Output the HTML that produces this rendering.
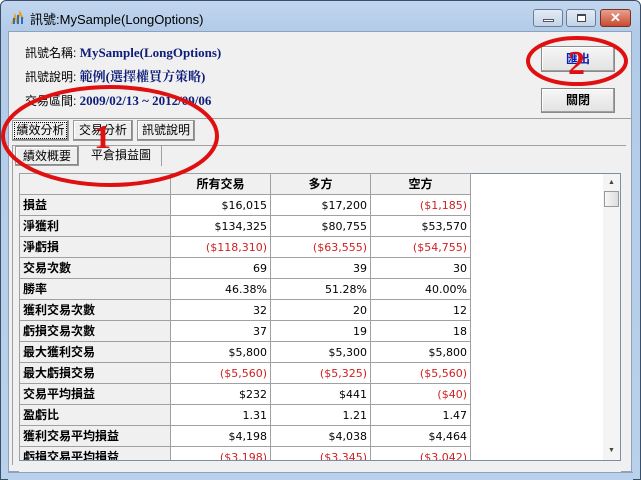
<!DOCTYPE html>
<html><head><meta charset="utf-8"><style>
*{margin:0;padding:0;box-sizing:border-box}
body{width:641px;height:480px;overflow:hidden;background:#fff;font-family:"Liberation Sans","Noto Sans CJK TC",sans-serif;font-size:12px;position:relative}
.frame{position:absolute;left:0;top:0;width:641px;height:480px;background:linear-gradient(#c2d6ee,#b2cbe8 30px,#b9d1ea);border:1px solid #3a4f6a;border-radius:6px 6px 0 0}
.title{position:absolute;left:30px;top:9px;font-size:13px;color:#000}
.wb{position:absolute;top:9px;height:18px;border:1px solid #6b7d95;border-radius:3px;background:linear-gradient(#e3ecf6,#c3d3e6)}
.client{position:absolute;left:8px;top:31px;width:624px;height:441px;background:#f0f0f0;border:1px solid #8da2bd}
.abs{position:absolute}
.lbl{position:absolute;left:25px;font-size:12px;color:#000;line-height:16px;height:16px;white-space:nowrap}
.lbl b{color:#0d1c78;font-family:"Liberation Serif","Noto Serif CJK SC",serif;font-size:13px;line-height:16px}
.btn{position:absolute;background:linear-gradient(#f6f6f6,#e2e2e2);border:1px solid #8a8a8a;box-shadow:inset -1px -1px 0 #a0a0a0,inset 1px 1px 0 #fff;text-align:center;font-weight:bold}
.tb{position:absolute;top:120px;height:21px;border:1px solid #999;background:#eee;box-shadow:inset -1px -1px 0 #888,inset 1px 1px 0 #fff;text-align:center;line-height:19px;font-size:12px}
table{border-collapse:collapse;position:absolute;left:19px;top:173px;background:#fff}
td{border:1px solid #a0a0a0;height:21px;line-height:19px;font-size:11px;padding:0 3px;text-align:right;vertical-align:middle;font-family:"DejaVu Sans",sans-serif;white-space:nowrap}
td.h{background:#f0f0f0;text-align:left;font-weight:bold;font-size:12px;font-family:"Liberation Sans","Noto Sans CJK TC",sans-serif;width:151px}
tr.hd td{background:#f0f0f0;text-align:center;font-weight:bold;font-size:12px;font-family:"Liberation Sans","Noto Sans CJK TC",sans-serif}
.r{color:#d02020}
</style></head><body>
<div class="frame"></div>
<svg class="abs" style="left:10px;top:10px" width="16" height="16"><path d="M2 14 L5 6 L7 12 L10 3 L13 9" stroke="#f0a020" stroke-width="2" fill="none"/><path d="M4 14 V8 M8 14 V5 M12 14 V7" stroke="#2a70c0" stroke-width="2"/></svg>
<div class="title">訊號:MySample(LongOptions)</div>
<div class="wb" style="left:533px;width:30px"><div class="abs" style="left:9px;top:9px;width:11px;height:3px;border:1px solid #556;background:#fff"></div></div>
<div class="wb" style="left:566px;width:30px"><div class="abs" style="left:10px;top:4px;width:9px;height:8px;border:1px solid #445;border-top-width:2px;background:#fff"></div></div>
<div class="wb" style="left:600px;width:31px;background:linear-gradient(#e8a090,#c84a30);border-color:#7a3020;color:#fff;text-align:center;font-weight:bold;font-size:13px;line-height:15px">✕</div>
<div class="client"></div>
<div class="lbl" style="top:45px">訊號名稱: <b>MySample(LongOptions)</b></div>
<div class="lbl" style="top:69px">訊號說明: <b>範例(選擇權買方策略)</b></div>
<div class="lbl" style="top:93px">交易區間: <b>2009/02/13 ~ 2012/09/06</b></div>
<div class="btn" style="left:541px;top:46px;width:74px;height:26px;line-height:24px;color:#1020b0">匯出</div>
<div class="btn" style="left:541px;top:88px;width:74px;height:25px;line-height:23px">關閉</div>
<div class="abs" style="left:8px;top:118px;width:624px;height:1px;background:#a0a0a0"></div>
<div class="tb" style="left:12px;width:57px;outline:1px dotted #000;outline-offset:-3px">績效分析</div>
<div class="tb" style="left:73px;width:60px">交易分析</div>
<div class="tb" style="left:137px;width:58px">訊號說明</div>
<div class="abs" style="left:12px;top:145px;width:614px;height:1px;background:#a0a0a0"></div>
<div class="abs" style="left:12px;top:145px;width:1px;height:320px;background:#a0a0a0"></div>
<div class="tb" style="left:15px;top:146px;width:64px;height:20px;line-height:18px">績效概要</div>
<div class="abs" style="left:81px;top:146px;width:81px;height:20px;border-right:1px solid #a0a0a0;text-align:center;line-height:18px">平倉損益圖</div>
<div class="abs" style="left:19px;top:173px;width:602px;height:288px;background:#fff;border:1px solid #7a8ea8"></div>
<div class="abs" style="left:603px;top:174px;width:17px;height:286px;background:#f4f4f4"><div style="position:absolute;left:1px;top:17px;width:15px;height:16px;border:1px solid #999;background:linear-gradient(90deg,#f6f6f6,#ddd)"></div><div style="position:absolute;left:5px;top:5px;font-size:7px;color:#444">▲</div><div style="position:absolute;left:5px;top:273px;font-size:7px;color:#444">▼</div></div>
<table>
<tr class="hd"><td class="h" style="background:#f0f0f0"></td><td style="width:100px">所有交易</td><td style="width:100px">多方</td><td style="width:100px">空方</td></tr>
<tr><td class="h">損益</td><td>$16,015</td><td>$17,200</td><td class="r">($1,185)</td></tr>
<tr><td class="h">淨獲利</td><td>$134,325</td><td>$80,755</td><td>$53,570</td></tr>
<tr><td class="h">淨虧損</td><td class="r">($118,310)</td><td class="r">($63,555)</td><td class="r">($54,755)</td></tr>
<tr><td class="h">交易次數</td><td>69</td><td>39</td><td>30</td></tr>
<tr><td class="h">勝率</td><td>46.38%</td><td>51.28%</td><td>40.00%</td></tr>
<tr><td class="h">獲利交易次數</td><td>32</td><td>20</td><td>12</td></tr>
<tr><td class="h">虧損交易次數</td><td>37</td><td>19</td><td>18</td></tr>
<tr><td class="h">最大獲利交易</td><td>$5,800</td><td>$5,300</td><td>$5,800</td></tr>
<tr><td class="h">最大虧損交易</td><td class="r">($5,560)</td><td class="r">($5,325)</td><td class="r">($5,560)</td></tr>
<tr><td class="h">交易平均損益</td><td>$232</td><td>$441</td><td class="r">($40)</td></tr>
<tr><td class="h">盈虧比</td><td>1.31</td><td>1.21</td><td>1.47</td></tr>
<tr><td class="h">獲利交易平均損益</td><td>$4,198</td><td>$4,038</td><td>$4,464</td></tr>
<tr><td class="h">虧損交易平均損益</td><td class="r">($3,198)</td><td class="r">($3,345)</td><td class="r">($3,042)</td></tr>
</table>
<div class="abs" style="left:19px;top:460px;width:602px;height:20px;background:#f0f0f0;border-top:1px solid #7a8ea8"></div>
<div class="abs" style="left:8px;top:472px;width:625px;height:8px;background:#b9d1ea;border-top:1px solid #8da2bd"></div>
<svg class="abs" style="left:0;top:0" width="641" height="480">
<ellipse cx="110" cy="136" rx="107" ry="49" fill="none" stroke="#e01010" stroke-width="4"/>
<ellipse cx="577" cy="61" rx="49" ry="23" fill="none" stroke="#e01010" stroke-width="4"/>
<text x="94" y="148" font-family="Liberation Serif,serif" font-size="34" font-weight="bold" fill="#e01010">1</text>
<text x="568" y="74" font-family="Liberation Serif,serif" font-size="34" font-weight="bold" fill="#e01010">2</text>
</svg>
</body></html>
